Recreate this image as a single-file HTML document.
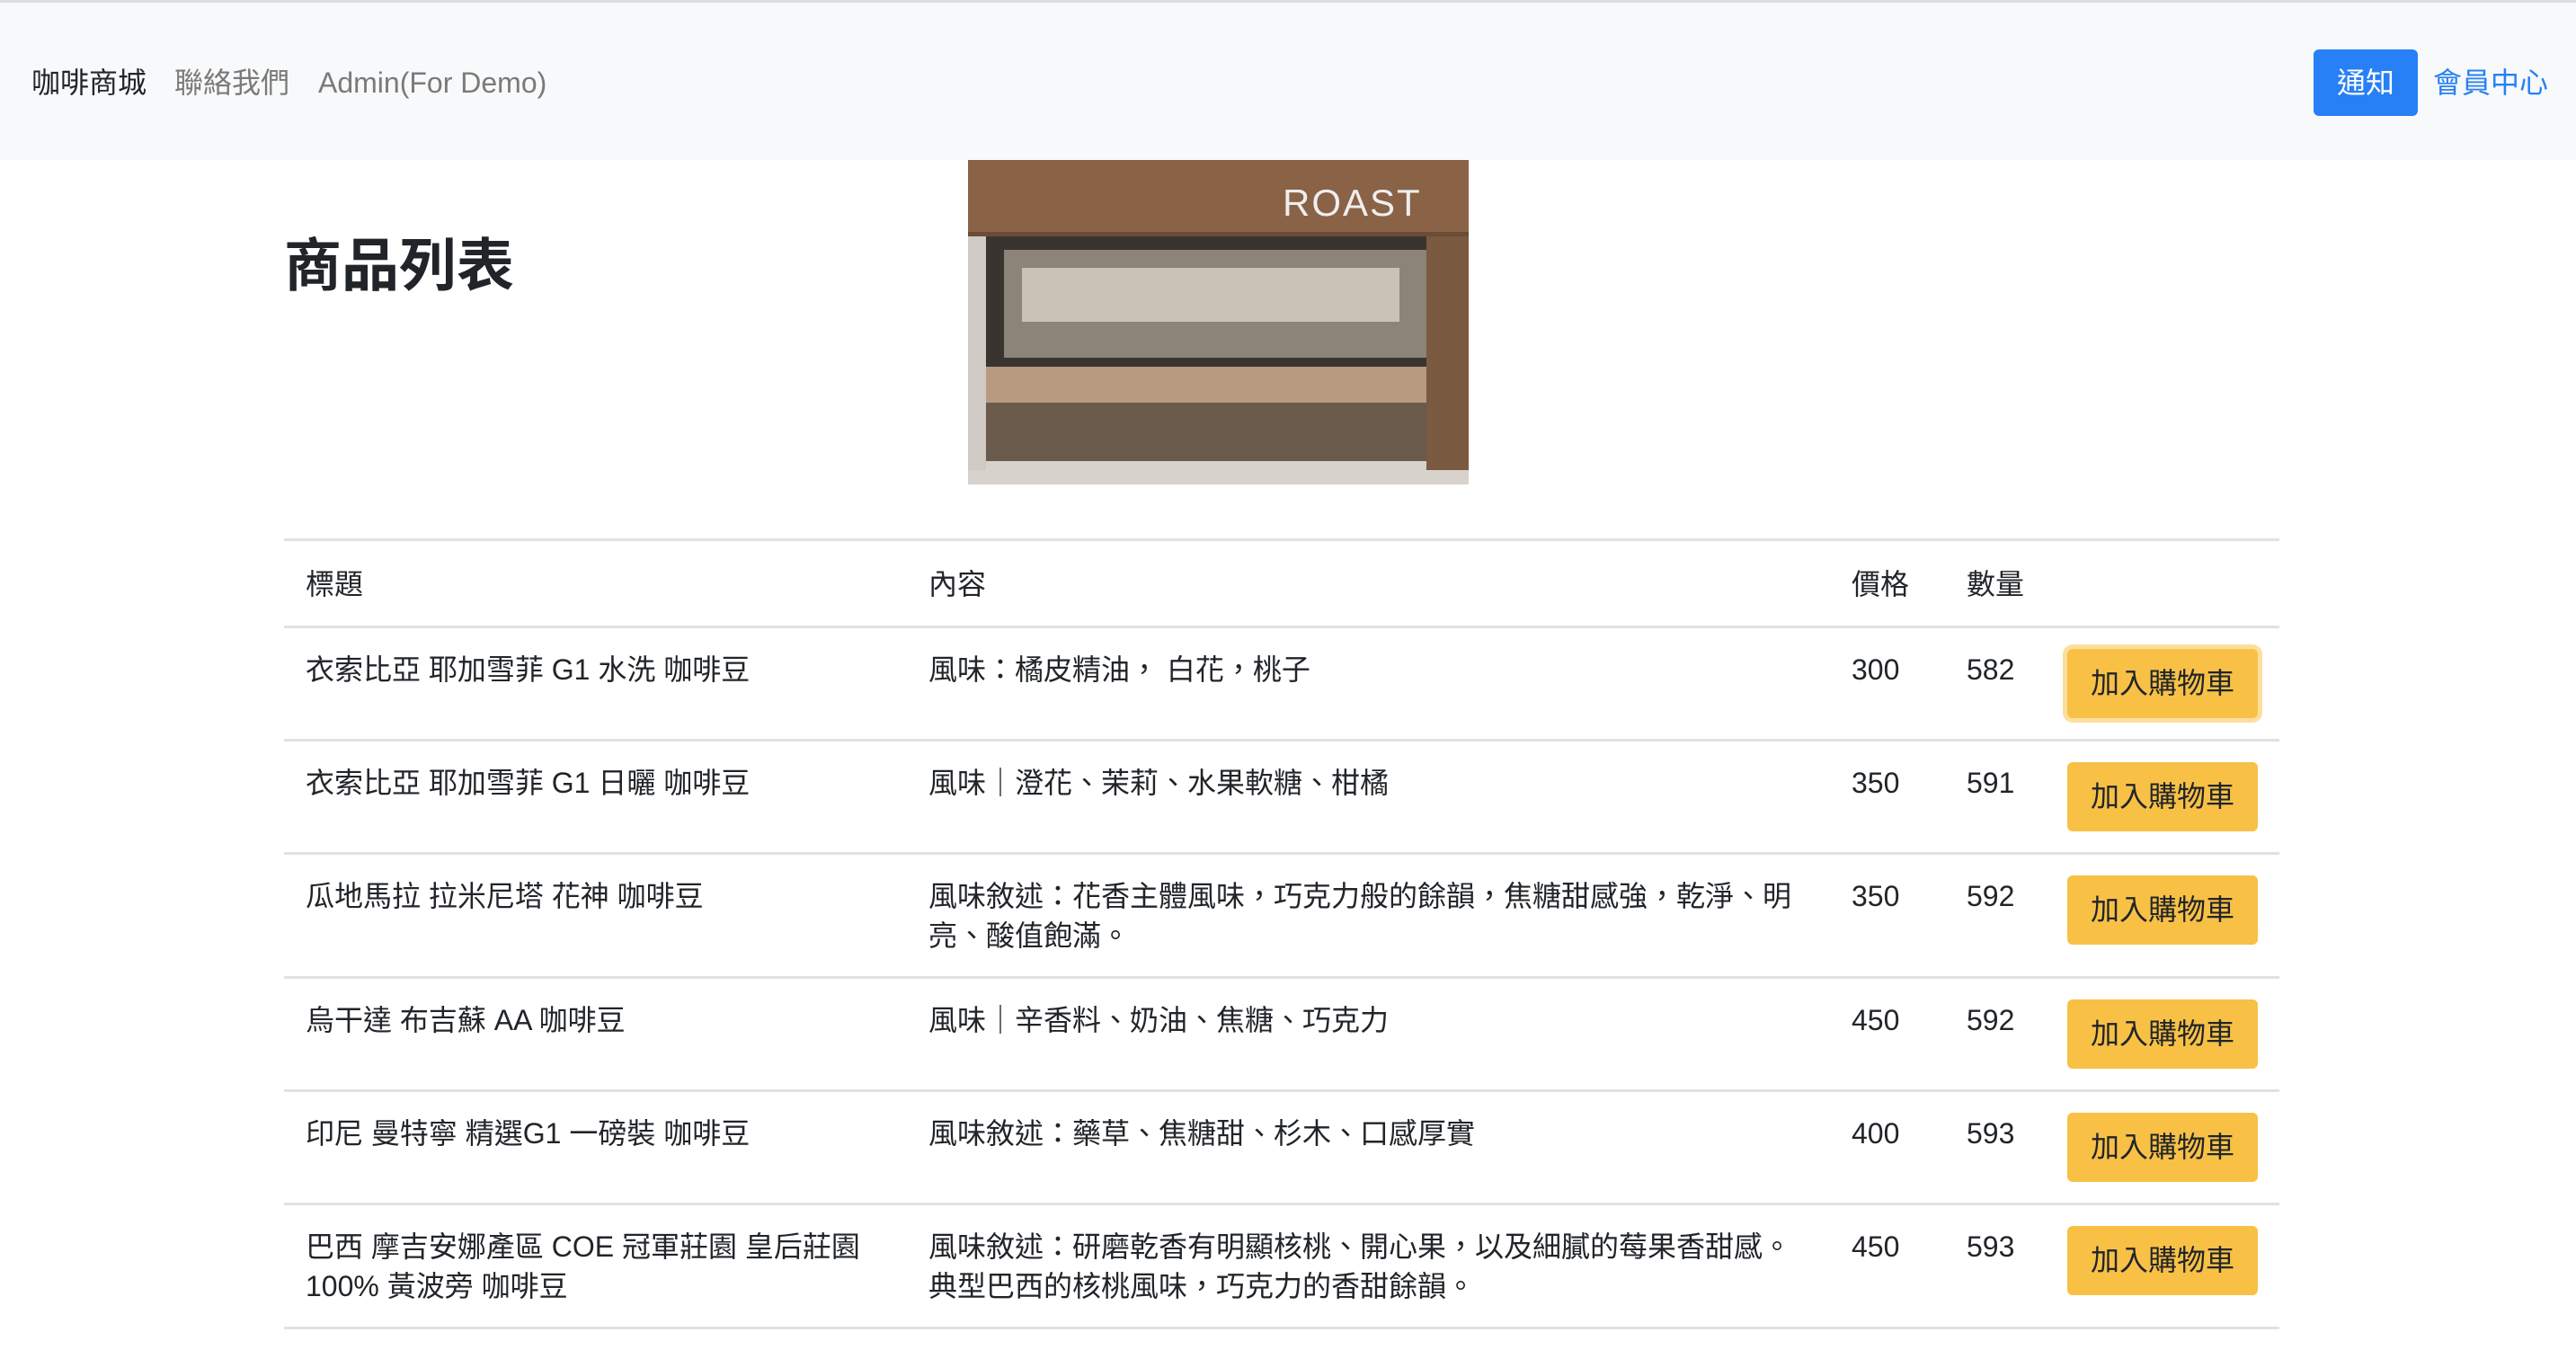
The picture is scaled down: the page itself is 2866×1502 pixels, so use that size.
<!DOCTYPE html>
<html><head><meta charset="utf-8"><style>
*{box-sizing:border-box;margin:0;padding:0}
body{width:2866px;height:1502px;background:#fff;font-family:"Liberation Sans","Noto Sans CJK TC",sans-serif;color:#212529;overflow:hidden;position:relative}
.nav{position:absolute;left:0;top:0;width:2866px;height:178px;background:#f8f9fa;border-top:3px solid #dcdde0}
.nav span{position:absolute;top:69px;font-size:32px;line-height:40px}
.btn-blue{position:absolute;left:2574px;top:52px;width:116px;height:74px;background:#2780f5;border-radius:6px;color:#fff;font-size:32px;line-height:74px;text-align:center}
h1{position:absolute;left:316px;top:258px;font-size:64px;line-height:76px;font-weight:bold}
.img{position:absolute;left:1077px;top:178px;width:557px;height:361px}
table{position:absolute;left:316px;top:599px;width:2220px;border-collapse:collapse;table-layout:fixed;font-size:32px;line-height:44px}
td,th{text-align:left;font-weight:normal;vertical-align:top;border-top:3px solid #dee2e6;padding:24px 0 23px 24px}
tr:last-child td{border-bottom:3px solid #dee2e6}
th{padding:26px 0 24px 24px}
.y{display:inline-block;width:212px;height:77px;background:#f8c146;border-radius:6px;line-height:77px;text-align:center;margin-top:-1px}
.f{box-shadow:0 0 0 5px #fbdf9f}
</style></head><body>
<div class="nav">
<span style="left:35px;color:#212529">咖啡商城</span>
<span style="left:194px;color:#7a7a7a">聯絡我們</span>
<span style="left:354px;color:#7a7a7a">Admin(For Demo)</span>
<div class="btn-blue">通知</div>
<span style="left:2707px;color:#2780f5">會員中心</span>
</div>
<h1>商品列表</h1>
<svg class="img" viewBox="0 0 557 361">
<rect width="557" height="361" fill="#6b4c36"/>
<rect y="0" width="557" height="80" fill="#8a6246"/>
<text x="350" y="62" font-family="Liberation Sans" font-size="42" fill="#eee" letter-spacing="2">ROAST</text>
<rect x="20" y="85" width="510" height="250" fill="#3a3430"/>
<rect x="40" y="100" width="470" height="120" fill="#8c8478"/>
<rect x="60" y="120" width="420" height="60" fill="#c9c2b5"/>
<rect x="20" y="230" width="510" height="40" fill="#b89a80"/>
<rect x="20" y="270" width="510" height="70" fill="#6a5a4c"/>
<rect x="0" y="335" width="557" height="26" fill="#d7d2cc"/>
<rect x="510" y="85" width="47" height="260" fill="#7a5a40"/>
<rect x="0" y="85" width="20" height="260" fill="#cfcac4"/>
</svg>
<table>
<colgroup><col style="width:693px"><col style="width:1027px"><col style="width:128px"><col style="width:112px"><col style="width:260px"></colgroup>
<tr><th>標題</th><th>內容</th><th>價格</th><th>數量</th><th></th></tr>
<tr><td>衣索比亞 耶加雪菲 G1 水洗 咖啡豆</td><td>風味：橘皮精油， 白花，桃子</td><td>300</td><td>582</td><td><span class="y f">加入購物車</span></td></tr>
<tr><td>衣索比亞 耶加雪菲 G1 日曬 咖啡豆</td><td>風味｜澄花、茉莉、水果軟糖、柑橘</td><td>350</td><td>591</td><td><span class="y">加入購物車</span></td></tr>
<tr><td>瓜地馬拉 拉米尼塔 花神 咖啡豆</td><td>風味敘述：花香主體風味，巧克力般的餘韻，焦糖甜感強，乾淨、明<br>亮、酸值飽滿。</td><td>350</td><td>592</td><td><span class="y">加入購物車</span></td></tr>
<tr><td>烏干達 布吉蘇 AA 咖啡豆</td><td>風味｜辛香料、奶油、焦糖、巧克力</td><td>450</td><td>592</td><td><span class="y">加入購物車</span></td></tr>
<tr><td>印尼 曼特寧 精選G1 一磅裝 咖啡豆</td><td>風味敘述：藥草、焦糖甜、杉木、口感厚實</td><td>400</td><td>593</td><td><span class="y">加入購物車</span></td></tr>
<tr><td>巴西 摩吉安娜產區 COE 冠軍莊園 皇后莊園<br>100% 黃波旁 咖啡豆</td><td>風味敘述：研磨乾香有明顯核桃、開心果，以及細膩的莓果香甜感。<br>典型巴西的核桃風味，巧克力的香甜餘韻。</td><td>450</td><td>593</td><td><span class="y">加入購物車</span></td></tr>
</table>
</body></html>
